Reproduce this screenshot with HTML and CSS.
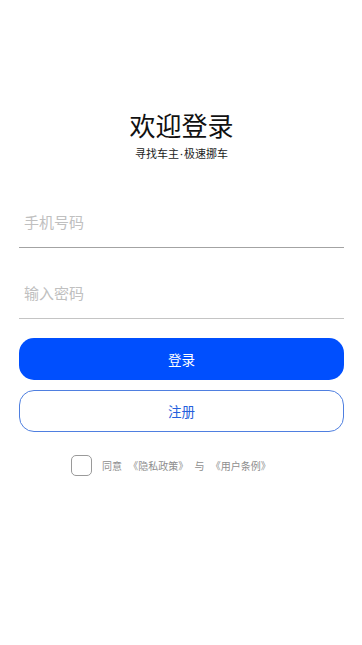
FILE: index.html
```html
<!DOCTYPE html>
<html lang="zh-CN">
<head>
<meta charset="utf-8">
<meta name="viewport" content="width=device-width, initial-scale=1">
<title>欢迎登录</title>
<link rel="stylesheet" href="styles.css">
</head>
<body>
<main class="page">
  <header class="header">
    <h1 class="title">欢迎登录</h1>
    <p class="subtitle">寻找车主<span class="dot">·</span>极速挪车</p>
  </header>
  <form class="form">
    <label class="field field-phone">
      <input class="input" type="tel" placeholder="手机号码">
    </label>
    <label class="field field-password">
      <input class="input" type="password" placeholder="输入密码">
    </label>
    <button type="button" class="btn btn-primary">登录</button>
    <button type="button" class="btn btn-outline">注册</button>
    <div class="agree">
      <span class="checkbox"></span>
      <span class="agree-text">同意 《隐私政策》 与 《用户条例》</span>
    </div>
  </form>
</main>
</body>
</html>
```
FILE: styles.css
```css
* {
  box-sizing: border-box;
}

html, body {
  margin: 0;
  padding: 0;
  background: #ffffff;
}

body {
  font-family: "Noto Sans CJK SC", "Noto Sans", sans-serif;
  color: #111;
}

.page {
  display: flex;
  flex-direction: column;
  padding: 110px 18px 0 19px;
}

.header {
  display: flex;
  flex-direction: column;
  align-items: center;
}

.title {
  margin: 0;
  font-size: 26px;
  line-height: 30px;
  font-weight: 400;
  color: #111;
}

.subtitle {
  margin: 6px 0 0;
  height: 14px;
  font-size: 11px;
  line-height: 14px;
  color: #222;
}

.dot {
  font-family: "Noto Sans", sans-serif;
  line-height: 1;
  padding: 0 1px;
}

.form {
  display: flex;
  flex-direction: column;
  margin-top: 37px;
}

.field {
  display: flex;
  align-items: center;
  height: 51px;
  border-bottom: 1px solid #a3a3a3;
}

.field-password {
  margin-top: 20px;
  border-bottom-color: #c4c4c4;
}

.input {
  width: 100%;
  border: none;
  outline: none;
  padding: 0 0 0 5px;
  font-family: inherit;
  font-size: 15px;
  line-height: 20px;
  color: #333;
  background: transparent;
}

.input::placeholder {
  color: #c0c0c0;
}

.btn {
  display: flex;
  align-items: center;
  justify-content: center;
  height: 42px;
  border-radius: 15px;
  font-family: inherit;
  font-size: 13.5px;
  padding: 0;
  cursor: pointer;
}

.btn-primary {
  margin-top: 19px;
  background: #004ffe;
  border: none;
  color: #ffffff;
}

.btn-outline {
  margin-top: 10px;
  background: #ffffff;
  border: 1px solid #4f7fe0;
  color: #2560dc;
}

.agree {
  display: flex;
  align-items: center;
  gap: 10px;
  margin-top: 23px;
  padding-left: 52px;
}

.checkbox {
  width: 21px;
  height: 21px;
  border: 1.5px solid #9a9a9a;
  border-radius: 5px;
}

.agree-text {
  font-size: 10px;
  line-height: 14px;
  word-spacing: 4px;
  color: #8e8e8e;
}
```
